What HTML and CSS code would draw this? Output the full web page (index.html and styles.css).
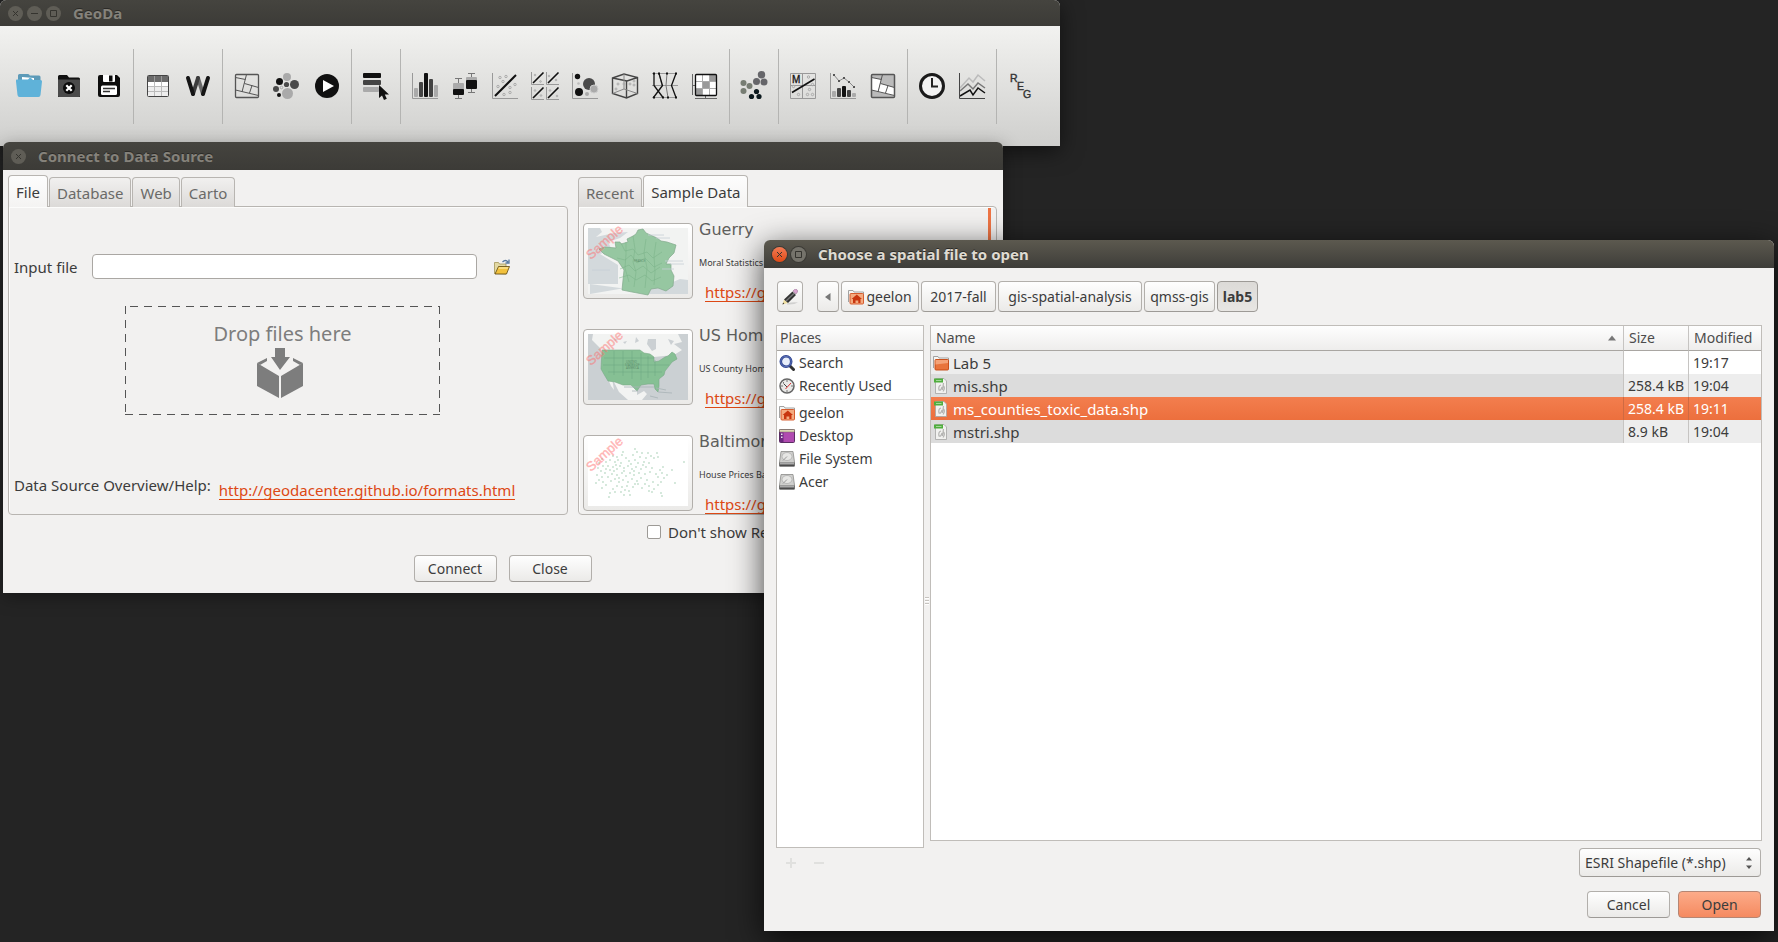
FILE: index.html
```html
<!DOCTYPE html>
<html lang="en">
<head>
<meta charset="utf-8">
<title>GeoDa</title>
<link rel="stylesheet" href="styles.css">
</head>
<body>
<main class="desktop">

<section class="window window-main" aria-label="GeoDa">
  <header class="titlebar titlebar-short">
    <button class="wm" aria-label="Close"><svg viewBox="0 0 15 15"><path d="M5 5l5 5M10 5l-5 5"/></svg></button>
    <button class="wm" aria-label="Minimize"><svg viewBox="0 0 15 15"><path d="M4 7.500h7"/></svg></button>
    <button class="wm" aria-label="Maximize"><svg viewBox="0 0 15 15"><path d="M4.500 4.500h6v6h-6z"/></svg></button>
    <h1 class="title">GeoDa</h1>
  </header>
  <nav class="toolbar">
    <button class="tool" aria-label="Open"><svg viewBox="0 0 30 30"><path fill="#5c9ab8" d="M4 4.500Q4 3 5.500 3H14q1.500 0 1.800 1.500H25q1.500 0 1.500 1.500v6H4z"/><path fill="#fff" d="M8 6l12 1v4H8z"/><path fill="#5fb2d9" d="M2.500 8.500H14L15.500 7H17l2 2h7.500q1.700 0 1.500 1.500L26.500 24q-.3 2-2 2h-19q-1.700 0-2-2L2 10.500q-.2-2 .500-2z"/></svg></button>
    <button class="tool" aria-label="Close project"><svg viewBox="0 0 30 30"><path fill="#111" d="M4 26V5.500Q4 4 5.500 4H13l2 2.500h9.500Q26 6.500 26 8v18z"/><path fill="#4a4a4a" d="M4 8.500h22V25q0 1-1 1H5q-1 0-1-1z"/><circle cx="15" cy="17" r="6" fill="#0b0b0b"/><path stroke="#fff" stroke-width="2.200" d="M12.300 14.300l5.400 5.400M17.700 14.300l-5.400 5.400"/></svg></button>
    <button class="tool" aria-label="Save"><svg viewBox="0 0 30 30"><path fill="#0d0d0d" d="M4 6q0-2 2-2h17l3 3v17q0 2-2 2H6q-2 0-2-2z"/><path fill="#fff" d="M9 4h12v6q0 1-1 1H10q-1 0-1-1z"/><path fill="#0d0d0d" d="M15 4.500h3.500v6H15z"/><rect x="7" y="14.500" width="16" height="9.500" rx="1.500" fill="#fff"/><path stroke="#333" stroke-width="1.500" d="M9 17.500h12M9 20.500h7"/></svg></button>
    <span class="sep"></span>
    <button class="tool" aria-label="Table"><svg viewBox="0 0 30 30"><rect x="4.500" y="4.500" width="21" height="21" rx="1" fill="#fff"/><path fill="#eee" d="M5 16h20v9H5z"/><path fill="#6b6b6b" d="M5 5h20v6H5z"/><path stroke="#bbb" fill="none" d="M5 15.500h20M5 20.500h20M11.500 11v14M18.500 11v14"/><path stroke="#999" d="M11.500 5v6M18.500 5v6"/><rect x="4.500" y="4.500" width="21" height="21" rx="1" fill="none" stroke="#444"/></svg></button>
    <button class="tool" aria-label="Weights"><svg viewBox="0 0 30 30" fill="none" stroke-width="4" stroke-linecap="round" stroke-linejoin="round"><path stroke="#6a6a6a" d="M15 7l5 16"/><path stroke="#3c3c3c" d="M10 23l5-16"/><path stroke="#151515" d="M5 7l5 16M20 23l5-16"/></svg></button>
    <span class="sep"></span>
    <button class="tool" aria-label="Map"><svg viewBox="0 0 30 30" fill="none" stroke="#555"><rect x="3.500" y="3.500" width="23" height="23" rx="1" stroke-width="1.300"/><path d="M3.500 6.500l10 2M14.500 3.500L10 21M3.500 19l23 5.500M12.500 12.500l14 4M20 14.500L17.500 22"/></svg></button>
    <button class="tool" aria-label="Cartogram"><svg viewBox="0 0 30 30"><g fill="#aaa"><circle cx="15" cy="6" r="4"/><circle cx="15.500" cy="22.500" r="5.500"/></g><g fill="#4a4a4a"><circle cx="22.500" cy="13.500" r="4.500"/><circle cx="14.500" cy="13.500" r="2.600"/><circle cx="4" cy="18" r="3"/></g><g fill="#111"><circle cx="7.500" cy="10.500" r="3.500"/><circle cx="7" cy="24" r="2"/></g><circle cx="9.500" cy="16.500" r="1.300" fill="none" stroke="#aaa"/></svg></button>
    <button class="tool" aria-label="Map movie"><svg viewBox="0 0 30 30"><circle cx="15" cy="15" r="12" fill="#111"/><path fill="#fff" d="M11 9l11 6-11 6z"/></svg></button>
    <span class="sep"></span>
    <button class="tool" aria-label="Category editor"><svg viewBox="0 0 30 30"><rect x="2" y="2" width="18" height="5" rx="1" fill="#111"/><rect x="2" y="9" width="18" height="5" rx="1" fill="#444"/><rect x="2" y="16" width="16" height="5" rx="1" fill="#aaa"/><path fill="#111" d="M18 14v13l3-2.500 2 4.500 2.800-1.300-2-4.200H28z"/></svg></button>
    <span class="sep"></span>
    <button class="tool" aria-label="Histogram"><svg viewBox="0 0 30 30"><path d="M2.500 2v25.500H28" fill="none" stroke="#999"/><g fill="#aaa"><rect x="4" y="17" width="4" height="9" rx="1"/><rect x="24" y="14" width="4" height="12" rx="1"/></g><g fill="#444"><rect x="9" y="11" width="4" height="15" rx="1"/><rect x="19" y="8" width="4" height="18" rx="1"/></g><rect x="14" y="2" width="4" height="24" rx="1" fill="#111"/></svg></button>
    <button class="tool" aria-label="Box plot"><svg viewBox="0 0 30 30"><path fill="none" stroke="#777" d="M5 7.500h7M8.500 7.500v20M5 27.500h7M18 2.500h7M21.500 2.500v19M18 21.500h7"/><rect x="3" y="12" width="11" height="7" rx="1" fill="#aaa"/><rect x="3" y="18" width="11" height="6" rx="1" fill="#111"/><rect x="16" y="6" width="11" height="4" rx="1" fill="#aaa"/><rect x="16" y="9" width="11" height="9" rx="1" fill="#111"/></svg></button>
    <button class="tool" aria-label="Scatter plot"><svg viewBox="0 0 30 30" fill="none"><path d="M2.500 2v25.500H28" stroke="#999"/><g stroke="#aaa"><circle cx="10" cy="6.500" r="1.200"/><circle cx="16" cy="5.500" r="1.200"/><circle cx="13" cy="10.500" r="1.200"/><circle cx="8" cy="15.500" r="1.200"/><circle cx="25" cy="13.500" r="1.200"/><circle cx="20" cy="16.500" r="1.200"/><circle cx="20" cy="21.500" r="1.200"/><circle cx="14" cy="23.500" r="1.200"/></g><path d="M5 25L26 4" stroke="#111" stroke-width="2"/></svg></button>
    <button class="tool" aria-label="Scatter plot matrix"><svg viewBox="0 0 30 30" fill="none"><path stroke="#999" d="M1.500 1v12.500H14M16.500 1v12.500H29M1.500 16v12.500H14M16.500 16v12.500H29"/><path stroke="#111" stroke-width="1.600" d="M3 12L13.500 1.500M18 12L28.500 1.500M3 27l10.500-10.500M18 27l10.500-10.500"/><g stroke="#aaa"><circle cx="5" cy="4" r=".8"/><circle cx="10.500" cy="10.500" r=".8"/><circle cx="19" cy="5" r=".8"/><circle cx="26" cy="9" r=".8"/><circle cx="5" cy="19.500" r=".8"/><circle cx="11" cy="24.500" r=".8"/><circle cx="20" cy="19.500" r=".8"/><circle cx="27" cy="25" r=".8"/></g></svg></button>
    <button class="tool" aria-label="Bubble chart"><svg viewBox="0 0 30 30"><path d="M2.500 2v25.500H28" fill="none" stroke="#999"/><circle cx="7.500" cy="5.500" r="2.700" fill="#111"/><circle cx="19" cy="13" r="6" fill="#4a4a4a"/><circle cx="24" cy="18" r="4" fill="#aaa" stroke="#ccc"/><circle cx="9" cy="21" r="4" fill="#111"/><circle cx="17" cy="23" r="2" fill="#aaa"/><circle cx="8.500" cy="12.500" r="1.300" fill="#bbb"/></svg></button>
    <button class="tool" aria-label="3D scatter plot"><svg viewBox="0 0 30 30" fill="none" stroke="#444"><path stroke-width="1.400" d="M2.500 7L14 3l13.500 3.500v16L16.500 27l-14-4.500zM2.500 7L17 10l10.500-3.500M16.500 10v17"/><path stroke="#888" d="M14 3v15L2.500 22.500M14 18l13.500 4.500"/><g stroke="#aaa"><circle cx="8" cy="13" r="1"/><circle cx="6" cy="18" r="1"/><circle cx="14" cy="13" r="1"/><circle cx="20" cy="13" r="1"/><circle cx="24" cy="14" r="1"/><circle cx="24" cy="10" r="1"/></g></svg></button>
    <button class="tool" aria-label="Parallel coordinate plot"><svg viewBox="0 0 30 30" fill="none"><path stroke="#999" d="M2 2.500h25M2 14.500h26M2 26.500h25"/><path stroke="#777" d="M9 2.500l3 12M17 2.500l-1 12 2 12"/><path stroke="#111" stroke-width="1.300" d="M4 2.500v12l9 12M9 2.500l3.500 12-9 12M26 2.500l-4.500 12 4.500 12"/><path fill="#111" d="M3 1.500h2v2H3zM8 1.500h2v2H8zM16 1.500h2v2h-2zM25 1.500h2v2h-2zM3 25.500h2v2H3zM12 25.500h2v2h-2zM17 25.500h2v2h-2zM25 25.500h2v2h-2z"/></svg></button>
    <button class="tool" aria-label="Conditional plot"><svg viewBox="0 0 30 30" fill="none"><path stroke="#666" d="M2.500 3v21M2.500 14.500H5M5 27.500h22M15.500 25v3"/><rect x="5.500" y="3.500" width="21" height="21" rx="1" fill="#fff"/><path fill="#999" d="M19.500 4H26v6.500h-6.500zM12.500 10.500h7v7h-7zM6 17.500h6.500V24H6z"/><path stroke="#aaa" d="M12.500 4v20M19.500 4v20M6 10.500h20M6 17.500h20"/><rect x="5.500" y="3.500" width="21" height="21" rx="1" stroke="#111" stroke-width="1.300"/></svg></button>
    <span class="sep"></span>
    <button class="tool" aria-label="Clusters"><svg viewBox="0 0 30 30"><g fill="#66666a"><circle cx="22.500" cy="3.700" r="3.700"/><circle cx="17.500" cy="10.500" r="3.500"/><circle cx="25" cy="11" r="3.500"/></g><g fill="#777d73"><circle cx="4.500" cy="12" r="3"/><circle cx="10.500" cy="15" r="3"/><circle cx="4.500" cy="20" r="3"/></g><g fill="#0d1a1f"><circle cx="17.500" cy="20.500" r="2.600"/><circle cx="12.500" cy="25.500" r="2.600"/><circle cx="20" cy="25.500" r="2.600"/></g></svg></button>
    <span class="sep"></span>
    <button class="tool" aria-label="Moran scatter plot"><svg viewBox="0 0 30 30" fill="none"><path stroke="#999" d="M2.500 2.500h25v25h-25zM2.500 14.500h25M14.500 2.500v25"/><g stroke="#aaa"><circle cx="20.500" cy="6" r="1.200"/><circle cx="24.500" cy="13.500" r="1.200"/><circle cx="21.500" cy="18.500" r="1.200"/><circle cx="19.500" cy="23.500" r="1.200"/><circle cx="24.500" cy="23.500" r="1.200"/><circle cx="10.500" cy="23.500" r="1.200"/><circle cx="5.500" cy="15.500" r="1.200"/></g><path stroke="#111" stroke-width="1.700" d="M4 21.500L26.500 8"/><text x="4" y="12" font-family="Liberation Sans, sans-serif" font-size="10" fill="#111" stroke="#111" stroke-width=".3">M</text></svg></button>
    <button class="tool" aria-label="Correlogram"><svg viewBox="0 0 30 30"><path fill="none" stroke="#999" d="M2.500 2v25.500H28"/><path fill="none" stroke="#888" d="M6 4l5 6 5-3 5 4 5 5"/><path fill="#555" d="M5 3h2v2H5zM10 9h2v2h-2zM15 6h2v2h-2zM20 10h2v2h-2zM25 15h2v2h-2z"/><g fill="#aaa"><rect x="4" y="20" width="4" height="6" rx="1"/><rect x="24" y="22" width="4" height="4" rx="1"/></g><g fill="#444"><rect x="9" y="17" width="4" height="9" rx="1"/><rect x="19" y="19" width="4" height="7" rx="1"/></g><rect x="14" y="15" width="4" height="11" rx="1" fill="#111"/></svg></button>
    <button class="tool" aria-label="Cluster map"><svg viewBox="0 0 30 30"><rect x="3.500" y="3.500" width="23" height="23" rx="1" fill="#bbb"/><path fill="#fff" d="M4 6.500l9 2L10 21l-6-2zM12.500 12.500L26 16.500v8L10.500 21z"/><g fill="none" stroke="#555"><rect x="3.500" y="3.500" width="23" height="23" rx="1" stroke-width="1.500"/><path d="M3.500 6.500l10 2M14.500 3.500L10 21M3.500 19l23 5.500M12.500 12.500l14 4M20 14.500L17.500 22"/></g></svg></button>
    <span class="sep"></span>
    <button class="tool" aria-label="Time"><svg viewBox="0 0 30 30" fill="none"><circle cx="15" cy="15" r="11.500" fill="#f2f2f2" stroke="#1a1a1a" stroke-width="3"/><path stroke="#222" stroke-width="2" d="M15 7v8.500h6"/></svg></button>
    <button class="tool" aria-label="Averages chart"><svg viewBox="0 0 30 30" fill="none" stroke-width="1.500"><path stroke="#bbb" d="M3 17l9-10 4 4 5-7 7 6"/><path stroke="#777" d="M3 20l8-7 5 5 5-6 7 5"/><path stroke="#111" d="M3 25l10-6 3 5 5-7 7 5"/><path stroke="#444" stroke-width="1" d="M2.500 2v25.500H28"/></svg></button>
    <span class="sep"></span>
    <button class="tool" aria-label="Regression"><svg viewBox="0 0 30 30" fill="#333" stroke="#333" stroke-width=".4" font-family="Liberation Sans, sans-serif" font-size="10.500"><text x="4" y="11">R</text><text x="11" y="19">E</text><text x="17" y="27">G</text></svg></button>
  </nav>
</section>

<section class="window window-source" aria-label="Connect to Data Source">
  <header class="titlebar">
    <button class="wm" aria-label="Close"><svg viewBox="0 0 15 15"><path d="M5 5l5 5M10 5l-5 5"/></svg></button>
    <h2 class="title">Connect to Data Source</h2>
  </header>
  <div class="source-body">
    <div class="columns">
      <div class="notebook">
        <div class="tabs" role="tablist">
          <button class="tab active" role="tab" aria-selected="true">File</button>
          <button class="tab" role="tab">Database</button>
          <button class="tab" role="tab">Web</button>
          <button class="tab" role="tab">Carto</button>
        </div>
        <div class="panel file-panel">
          <div class="input-row">
            <label for="input-file">Input file</label>
            <input id="input-file" class="field" type="text">
            <button class="browse" aria-label="Browse"><svg viewBox="0 0 16 16"><path fill="#e3d9a4" stroke="#a39558" stroke-width=".8" d="M.5 14.500v-11h4l1 1.500h6.500V15z"/><path fill="#f2c13c" stroke="#5d4710" stroke-width=".8" d="M1 15L4.500 7.500h11L12.500 15z"/><path fill="#fbe494" d="M5 8.200h9.300l-.6 1.500H4.300z"/><path fill="none" stroke="#54779f" stroke-width="1.300" d="M8.500 3q3-3 5.500 0M15 .5V4h-3.500"/></svg></button>
          </div>
          <div class="drop">
            <p class="drop-text">Drop files here</p>
            <svg class="drop-icon" viewBox="0 0 46 50"><g fill="#7d7d7d"><path d="M0 15l22 13v22L0 38zM46 15L24 28v22l22-12zM18 0h10v9h5L23 22 14 9h4z"/><path d="M0 15l10-5v3l-7 4zM46 15l-10-5v3l7 4z"/></g></svg>
          </div>
          <div class="help-row">
            <span>Data Source Overview/Help:</span>
            <a class="link help-link" href="#formats">http://geodacenter.github.io/formats.html</a>
          </div>
        </div>
      </div>
      <div class="notebook">
        <div class="tabs" role="tablist">
          <button class="tab" role="tab">Recent</button>
          <button class="tab active" role="tab" aria-selected="true">Sample Data</button>
        </div>
        <div class="panel sample-panel">
          <ul class="samples">
            <li class="sample">
              <button class="thumb" aria-label="Guerry"><svg viewBox="0 0 100 66"><path fill="#d3d9dc" d="M0 0h100v66H0z"/><path fill="#f2f3f2" d="M12 0h88v52l-8-1-7 3-5-1-2 3-20 0-2 7-24-3-30-4 0 10 35-6 23 6V66H0V56l30 0V37L12 26l12-4-4-8 12-4 8-6-14 1L8 9 14 4z"/><path fill="#96c7a1" stroke="#83a98c" stroke-width=".7" d="M11 21l6-2 11 1-1-6 5 0 1 2 7-2-1-3 6-3 3-2 2-4 5-1 3 4 11 5 4 3 6 1 9 3-2 8-5 5-3 6 5 0 0 6 3 6-1 10-7 5-8-3-7 1-3 6-16-3-10-2 2-20-6-9-8-4-6-3z"/><path fill="none" stroke="#79b186" stroke-width=".5" d="M33 15l4 8 8-2 5 6 9-3 6 6 9-6M29 30l8 2 6-5 6 8 8-5 9 9 8-4M32 41l9-4 6 6 8-5 8 7 9-6M31 50l10-3 7 5 9-5 7 6 9-4M45 8l2 13-2 13 3 10-2 15M58 11l-2 14 3 15-2 20M68 14l-2 14 1 16-1 13M38 14l0 12-1 14 4 14"/><path fill="none" stroke="#c6ced6" stroke-width=".8" d="M60 7h16M68 10h14M77 33h18M82 36h14M74 41h12M4 42h18"/><text x="46" y="34" class="map-label">FRANCE</text><text class="stamp" x="3" y="32" transform="rotate(-42 3 32)">Sample</text></svg></button>
              <div class="sample-info"><h3>Guerry</h3><p>Moral Statistics of France</p><a class="link" href="#guerry">https://geodacenter.github.io</a></div>
            </li>
            <li class="sample">
              <button class="thumb" aria-label="US Homicides"><svg viewBox="0 0 100 66"><path fill="#cbd0d3" d="M0 0h100v66H0z"/><path fill="#f2f3f2" d="M5 0h85l4 8-8 2 8 6-8 5-20 2H14L12 14 4 6zM17 38l14 5 10 1 8 7 0 10 7-4 3 3-5 6H40l-9-8-6-12-1-2 2 12-3-4z"/><path fill="#cbd0d3" d="M60 5l8 0 0 10-4 2-5-7zM48 3l3 4-4 2zM80 5l6 2-3 4zM26 4l4 2-3 1zM35 8l4-1-2 3z"/><path fill="#86c094" stroke="#78aa87" stroke-width=".6" d="M14 16h38l4 3 6 1 4 3 0 5 5-1 6-4 3-1 4-4 3 2 2 5-5 3-3 4-4 5-1 4-5 4 0 7-1 6-3-3-1-5-6 0-7 1-4 6-6-6-8 0-8-3-7-1-3-5-4-7z"/><path fill="none" stroke="#6ba580" stroke-width=".5" d="M16 24h50M15 31h66M20 38h54M26 17v24M35 17v25M44 17v28M53 19v27M60 22v22M67 26v16"/><path fill="none" stroke="#a8b3b6" stroke-width=".8" d="M36 53h30M44 57h6M68 54l10 2M70 58l14 1M62 62l8 2"/><text x="38" y="29" class="map-label">UNITED</text><text x="37" y="32" class="map-label">STATES OF</text><text x="38" y="35" class="map-label">AMERICA</text><text class="stamp" x="3" y="32" transform="rotate(-42 3 32)">Sample</text></svg></button>
              <div class="sample-info"><h3>US Homicides</h3><p>US County Homicides 1960-1990</p><a class="link" href="#homicides">https://geodacenter.github.io</a></div>
            </li>
            <li class="sample">
              <button class="thumb" aria-label="Baltimore"><svg viewBox="0 0 100 66"><path fill="#fff" d="M0 0h100v66H0z"/><path fill="none" stroke="#8fc2a0" stroke-width="1.400" stroke-linecap="round" d="M47 9h0M35 12h0M34 15h0M29 17h0M49 12h0M54 13h0M60 13h0M69 13h0M45 15h0M52 17h0M58 18h0M63 16h0M66 18h0M70 17h0M25 16h0M22 20h0M14 19h0M18 22h0M30 20h0M33 23h0M38 18h0M41 21h0M47 20h0M50 23h0M56 22h0M61 23h0M27 22h0M11 23h0M15 26h0M20 26h0M10 28h0M13 31h0M17 33h0M22 30h0M25 27h0M29 29h0M32 26h0M36 28h0M40 26h0M44 29h0M48 27h0M53 29h0M58 27h0M64 28h0M75 27h0M72 30h0M79 35h0M84 30h0M96 22h0M87 43h0M74 33h0M68 34h0M76 38h0M70 37h0M62 32h0M57 34h0M51 33h0M46 35h0M42 33h0M38 36h0M34 33h0M29 35h0M24 34h0M20 37h0M14 37h0M9 35h0M11 40h0M8 43h0M15 42h0M18 45h0M14 48h0M23 41h0M27 39h0M31 42h0M35 40h0M40 42h0M44 39h0M49 41h0M53 38h0M59 40h0M65 42h0M73 42h0M70 45h0M66 49h0M61 46h0M57 44h0M54 48h0M50 44h0M45 47h0M39 46h0M34 47h0M29 46h0M25 49h0M22 53h0M21 57h0M27 52h0M33 52h0M37 50h0M41 51h0M42 55h0M36 55h0M61 51h0M64 52h0M74 56h0M73 53h0M28 25h0M43 24h0M46 31h0M36 31h0M26 31h0M31 38h0M18 29h0M55 25h0M47 44h0"/><text class="stamp" x="3" y="32" transform="rotate(-42 3 32)">Sample</text></svg></button>
              <div class="sample-info"><h3>Baltimore</h3><p>House Prices Baltimore, MD</p><a class="link" href="#baltimore">https://geodacenter.github.io</a></div>
            </li>
          </ul>
          <span class="scroll-mark"></span>
        </div>
      </div>
    </div>
    <label class="check"><input type="checkbox"> Don't show Recent/Sample Data panel</label>
    <div class="source-actions">
      <button class="btn">Connect</button>
      <button class="btn">Close</button>
    </div>
  </div>
</section>

<section class="window window-chooser" aria-label="Choose a spatial file to open">
  <header class="titlebar titlebar-active">
    <button class="wm wm-close" aria-label="Close"><svg viewBox="0 0 15 15"><path d="M5 5l5 5M10 5l-5 5"/></svg></button>
    <button class="wm" aria-label="Maximize"><svg viewBox="0 0 15 15"><path d="M4.500 4.500h6v6h-6z"/></svg></button>
    <h2 class="title">Choose a spatial file to open</h2>
  </header>
  <div class="chooser-body">
    <nav class="pathbar">
      <button class="btn path path-edit" aria-label="Type a file name"><svg class="icon" viewBox="0 0 16 16"><path fill="#bbb" opacity=".6" d="M5 14.500q6-2 11-1-4 2.500-11 2z"/><path fill="#f0dfa0" d="M.5 15.500L2 10.500l4 3.500z"/><path fill="#333" d="M2 10.500L10.500 2.500l3.500 3.500L6 14zM.5 15.500l.6-2 1.200 1.200z"/><path fill="#777" d="M3.500 11.500L11.500 4l1 1-8 7.500z"/><path fill="#d9a3d0" stroke="#94678f" stroke-width=".5" d="M11 2l1.500-1.500q1.500-.8 2.500.3 1.200 1.200.3 2.500L14 5z"/></svg></button>
      <button class="btn path path-back" aria-label="Back"><svg class="arrow" viewBox="0 0 8 8"><path fill="#777" d="M6.500 0v8L1 4z"/></svg></button>
      <button class="btn path path-home"><svg class="icon" viewBox="0 0 16 16"><use href="#home"/></svg>geelon</button>
      <button class="btn path path-fall">2017-fall</button>
      <button class="btn path path-gis">gis-spatial-analysis</button>
      <button class="btn path path-qmss">qmss-gis</button>
      <button class="btn path path-current">lab5</button>
    </nav>
    <div class="panes">
      <div class="places-pane">
        <div class="places">
          <h3 class="list-head">Places</h3>
          <ul class="place-list">
            <li><svg class="icon" viewBox="0 0 16 16"><path stroke="#333" stroke-width="3" stroke-linecap="round" d="M11 11l3.500 3.500"/><circle cx="7" cy="6.500" r="5.200" fill="#e8eefa" stroke="#2c418f" stroke-width="2.600"/><circle cx="7" cy="6.500" r="5.200" fill="none" stroke="#7d93d0" stroke-width=".6"/></svg>Search</li>
            <li><svg class="icon" viewBox="0 0 16 16"><circle cx="8" cy="8" r="7" fill="#e9e9e7" stroke="#666" stroke-width="1.500"/><path stroke="#777" stroke-width="1" d="M8 2v2M8 12v2M2 8h2M12 8h2M3.800 3.800l1.200 1.200"/><path stroke="#444" stroke-width="1" d="M8 9L4.500 5.500"/><path stroke="#d33" stroke-width="1" d="M6.500 11L12 5"/></svg>Recently Used</li>
            <li class="place-split"><svg class="icon" viewBox="0 0 16 16"><g id="home"><path fill="#f5f5f3" stroke="#999" stroke-width=".9" d="M.5 13V1.500h4.500l1 1.500h9.500V6"/><rect x="2" y="4.500" width="13.500" height="10.500" rx="1" fill="#f4ab80" stroke="#d3501f" stroke-width=".9"/><path fill="#c8360f" d="M8.800 5.500l5.200 4.500h-1.500v4h-2.200v-2.500H7.500V14H5v-4H3.600z"/></g></svg>geelon</li>
            <li><svg class="icon" viewBox="0 0 16 16"><rect x=".5" y="1.500" width="15" height="13" rx="1" fill="#b04bb0" stroke="#5b2d63"/><path fill="#ddd8b8" stroke="#77735a" stroke-width=".5" d="M.5 1.500h15v2.500H.5z"/><path fill="#6d2a80" d="M1 4.500h3.500V14H1z"/><path fill="#efe9ef" d="M2 5.500h1.500V7H2zM2 8.500h1.500V10H2z"/></svg>Desktop</li>
            <li><svg class="icon" viewBox="0 0 16 16"><g id="disk"><path fill="#cfcfcd" stroke="#8b8b89" stroke-width=".8" d="M2 .5h12l1.500 10.500v4H.5v-4z"/><ellipse cx="8" cy="5.500" rx="5" ry="4" fill="#e6e6e4" stroke="#aaa" stroke-width=".7"/><path fill="none" stroke="#999" d="M4 9.500l4-4"/><path fill="#4b4b4b" d="M.5 11.500h15v4H.5z"/><path fill="#aaa" d="M1 11.500h14v2H1z"/></g></svg>File System</li>
            <li><svg class="icon" viewBox="0 0 16 16"><use href="#disk"/></svg>Acer</li>
          </ul>
        </div>
        <div class="place-tools">
          <button aria-label="Add bookmark" disabled><svg viewBox="0 0 10 10"><path d="M5 0v10M0 5h10"/></svg></button>
          <button aria-label="Remove bookmark" disabled><svg viewBox="0 0 10 10"><path d="M0 5h10"/></svg></button>
        </div>
      </div>
      <span class="grip"></span>
      <div class="files-pane">
        <div class="files">
          <table class="file-table">
            <colgroup><col><col class="col-size"><col class="col-modified"></colgroup>
            <thead>
              <tr><th><span class="sort">Name<svg class="sort-mark" viewBox="0 0 8 6"><path fill="#777" d="M0 5.500L4 .5l4 5z"/></svg></span></th><th>Size</th><th>Modified</th></tr>
            </thead>
            <tbody>
              <tr><td><span class="cell"><svg class="icon" viewBox="0 0 16 16"><path fill="#f5f5f3" stroke="#999" stroke-width=".9" d="M.5 13V1.500h4.500l1 1.500h9.500V6"/><rect x="2" y="4.500" width="13.500" height="10.500" rx="1" fill="#e8743c" stroke="#c4450f" stroke-width=".9"/><path fill="#f4a378" d="M2.500 5h12.500v3L2.500 9.500z"/></svg>Lab 5</span></td><td></td><td>19:17</td></tr>
              <tr><td><span class="cell"><svg class="icon" viewBox="0 0 16 16"><g id="doc"><path fill="#f1f1ef" stroke="#a5a5a3" stroke-width=".8" d="M2.500.5h8.500l2.500 2.500v12.500h-11z"/><path fill="#4fae3d" d="M1 .5h9v4H1z"/><path stroke="#b9e0b1" stroke-width=".8" d="M3 2.500h5.500"/><path fill="none" stroke="#b4b4b2" stroke-width="1.200" d="M10.500 5l-1 7M8 7q-3 1-2 5 2 1 3-3M10.500 8q2 2-.5 5.500"/></g></svg>mis.shp</span></td><td>258.4 kB</td><td>19:04</td></tr>
              <tr class="selected"><td><span class="cell"><svg class="icon" viewBox="0 0 16 16"><use href="#doc"/></svg>ms_counties_toxic_data.shp</span></td><td>258.4 kB</td><td>19:11</td></tr>
              <tr><td><span class="cell"><svg class="icon" viewBox="0 0 16 16"><use href="#doc"/></svg>mstri.shp</span></td><td>8.9 kB</td><td>19:04</td></tr>
            </tbody>
          </table>
        </div>
        <div class="filter">
          <select class="btn combo" aria-label="File type"><option>ESRI Shapefile (*.shp)</option></select>
          <svg class="combo-mark" viewBox="0 0 6 12"><path fill="#555" d="M0 3.500L3 0l3 3.500zM0 8.500L3 12l3-3.500z"/></svg>
        </div>
      </div>
    </div>
    <div class="chooser-actions">
      <button class="btn">Cancel</button>
      <button class="btn btn-open">Open</button>
    </div>
  </div>
</section>

</main>
</body>
</html>
```
FILE: styles.css
```css
* { box-sizing: border-box; }

body {
  margin: 0;
  background: #242424;
  color: #3c3c3c;
  font: 14px/20px "Noto Sans", "Open Sans", sans-serif;
}

h1, h2, h3, p, ul { margin: 0; padding: 0; font-size: inherit; font-weight: normal; }
ul { list-style: none; }
button, input, select { font: inherit; color: inherit; margin: 0; }
svg { display: block; }

.desktop { position: relative; min-height: 100vh; overflow: hidden; }

/* Windows */
.window {
  position: absolute;
  display: flex;
  flex-direction: column;
  background: #f2f1f0;
  border-radius: 6px 6px 0 0;
  box-shadow: 0 5px 22px rgba(0, 0, 0, .55);
}
.window-main { top: 0; left: 0; }
.window-source { top: 142px; left: 3px; right: 775px; box-shadow: 0 4px 18px rgba(0, 0, 0, .35); }
.window-chooser { top: 240px; left: 764px; right: 4px; bottom: 11px; box-shadow: 0 8px 32px rgba(0, 0, 0, .75); }

.titlebar {
  display: flex;
  align-items: center;
  gap: 4px;
  height: 28px;
  padding: 0 8px;
  border-radius: 6px 6px 0 0;
  background: linear-gradient(#45443f, #3c3b37);
  color: #85827b;
}
.titlebar-short { height: 26px; }
.titlebar-active { background: linear-gradient(#5c594f, #3e3d39); color: #dfdbd2; }
.title { margin-left: 8px; font-size: 15px; font-weight: bold; text-shadow: 0 -1px #2b2a27; }
.wm {
  width: 15px;
  height: 15px;
  padding: 0;
  border: 0;
  border-radius: 50%;
  background: #5f5d56;
}
.wm svg { width: 15px; height: 15px; fill: none; stroke: #35342f; }
.titlebar-active .wm { background: #75736b; box-shadow: 0 0 0 1px #3b3a35; }
.titlebar-active .wm-close { background: linear-gradient(#f37b55, #df4a16); }

/* Toolbar */
.toolbar {
  display: flex;
  align-items: center;
  height: 120px;
  padding: 0 19px 0 9px;
  background: linear-gradient(#f2f2f0, #cfcfcd);
}
.tool {
  display: grid;
  place-items: center;
  width: 40px;
  height: 40px;
  padding: 0;
  border: 0;
  background: none;
}
.tool svg { width: 30px; height: 30px; }
.sep { width: 9px; height: 75px; background: linear-gradient(#b4b4b2, #b4b4b2) center / 1px 100% no-repeat; }

/* Buttons */
.btn {
  height: 27px;
  min-width: 83px;
  padding: 0 8px;
  border: 1px solid #b2afab;
  border-bottom-color: #9d9a96;
  border-radius: 4px;
  background: linear-gradient(#fefefe, #ebeae8);
  white-space: nowrap;
}
.btn-open { background: linear-gradient(#fcab89, #f58a60); border-color: #b58674; }
.link { color: #dd4814; text-decoration: none; border-bottom: 1px solid #dd4814; line-height: 17px; }

/* Data source window */
.source-body { padding: 5px 6px 11px 5px; font-size: 15px; }
.columns { display: grid; grid-template-columns: 560fr 419fr; gap: 10px; }
.notebook { min-width: 0; }
.tabs { display: flex; align-items: flex-end; gap: 1px; height: 32px; }
.tab {
  height: 30px;
  padding: 0 7px;
  border: 1px solid #b8b5b1;
  border-bottom: 0;
  border-radius: 4px 4px 0 0;
  background: linear-gradient(#f1f0ef, #dcdad8);
  color: #6a6a68;
}
.tab.active {
  position: relative;
  z-index: 1;
  height: 32px;
  background: linear-gradient(#fdfdfd, #f4f3f2);
  color: #3c3c3c;
}
.panel {
  height: 309px;
  margin-top: -1px;
  border: 1px solid #b8b5b1;
  border-radius: 0 4px 4px 4px;
  box-shadow: inset 1px 1px #fcfcfb;
}
.file-panel { display: flex; flex-direction: column; padding: 47px 6px 14px 5px; }
.input-row { display: flex; align-items: center; }
.input-row label { width: 78px; }
.field { flex: 0 1 385px; min-width: 0; height: 25px; border: 1px solid #aaa7a3; border-radius: 4px; background: #fff; }
.browse { margin-left: 17px; padding: 0; border: 0; background: none; }
.browse svg { width: 16px; height: 16px; }

.drop {
  --dash: #555 0 8px, transparent 8px 14px;
  display: flex;
  flex-direction: column;
  align-items: center;
  width: 315px;
  height: 109px;
  margin: 27px 0 0 111px;
  padding-top: 14px;
  background:
    repeating-linear-gradient(90deg, var(--dash)) 5px 0 / 100% 1px no-repeat,
    repeating-linear-gradient(90deg, var(--dash)) 0 100% / 100% 1px no-repeat,
    repeating-linear-gradient(180deg, var(--dash)) 0 0 / 1px 100% no-repeat,
    repeating-linear-gradient(180deg, var(--dash)) 100% 0 / 1px 100% no-repeat;
}
.drop-text { color: #7d7d7d; font-size: 20px; line-height: 28px; }
.drop-icon { width: 46px; height: 50px; margin-right: 6px; }

.help-row { display: flex; gap: 8px; margin-top: auto; white-space: nowrap; }
.help-link { margin-top: 7px; }

.sample-panel { display: flex; justify-content: space-between; padding: 1px 5px 0 4px; overflow: hidden; }
.samples { display: grid; grid-auto-rows: 106px; padding-top: 15px; }
.sample { display: flex; gap: 6px; }
.thumb {
  width: 110px;
  height: 76px;
  padding: 4px;
  border: 1px solid #b2afab;
  border-radius: 4px;
  background: linear-gradient(#fff, #ebeae8);
}
.thumb svg { width: 100px; height: 66px; overflow: visible; }
.map-label { font: 3px "Noto Sans", sans-serif; fill: #5d8f6c; }
.stamp { font: 13px "Liberation Sans", sans-serif; fill: #ff6b6b; stroke: #ff6b6b; stroke-width: .4; opacity: .5; }
.sample-info { display: flex; flex-direction: column; align-items: flex-start; white-space: nowrap; }
.sample-info h3 { color: #5f5f5d; font: 16px/20px "DejaVu Sans", sans-serif; margin-top: -3px; }
.sample-info p { font-size: 9px; line-height: 16px; margin-top: 15px; }
.sample-info .link { margin: 13px 0 0 6px; }
.scroll-mark { width: 3px; background: #ee7444; }

.check { display: flex; align-items: center; gap: 7px; margin: 7px 0 0 639px; white-space: nowrap; }
.check input { appearance: none; width: 14px; height: 14px; border: 1px solid #9d9a96; border-radius: 2px; background: #fff; }
.source-actions { display: flex; justify-content: center; gap: 12px; padding-top: 13px; font-size: 14px; }

/* File chooser */
.chooser-body { flex: 1; min-height: 0; display: flex; flex-direction: column; padding: 13px 12px 13px; }
.pathbar { display: flex; gap: 2px; padding-left: 1px; }
.path { display: flex; align-items: center; justify-content: center; gap: 2px; min-width: 0; height: 31px; padding: 0; }
.path-edit { width: 26px; margin-right: 12px; }
.path-back { width: 22px; }
.path-home { width: 78px; }
.path-fall { width: 75px; }
.path-gis { width: 144px; }
.path-qmss { width: 71px; }
.path-current { width: 41px; font-weight: bold; background: linear-gradient(#dcdad7, #e8e6e3); border-color: #9d9a96; }
.icon { flex: none; width: 16px; height: 16px; }
.arrow { width: 8px; height: 8px; }

.panes { flex: 1; min-height: 0; display: flex; margin-top: 13px; }
.places-pane { flex: none; width: 148px; display: flex; flex-direction: column; }
.places { flex: 1; border: 1px solid #c0bdb9; background: #fff; }
.list-head, .file-table th {
  height: 25px;
  padding: 0 3px;
  border-bottom: 1px solid #a9a6a2;
  background: linear-gradient(#fefefe, #eeedec);
  color: #4c4c4c;
  font-weight: normal;
  line-height: 24px;
  text-align: left;
}
.place-list li { display: flex; align-items: center; gap: 4px; height: 23px; padding-left: 2px; }
.place-split { box-sizing: content-box; padding-top: 4px; background: linear-gradient(#dfdddb, #dfdddb) 0 2px / 100% 1px no-repeat; }
.place-tools { display: flex; gap: 18px; height: 29px; padding: 10px 10px 0; }
.place-tools button { padding: 0; border: 0; background: none; height: 10px; }
.place-tools svg { width: 10px; height: 10px; stroke: #e0e0de; stroke-width: 2; }
.grip {
  align-self: center;
  width: 4px;
  height: 8px;
  margin: 0 1px;
  background: repeating-linear-gradient(#c6c3bf 0 1px, #fff 1px 2px, transparent 2px 3px);
}

.files-pane { flex: 1; min-width: 0; display: flex; flex-direction: column; }
.files { flex: 1; border: 1px solid #c0bdb9; background: #fff; overflow: hidden; }
.file-table { width: 100%; table-layout: fixed; border-collapse: separate; border-spacing: 0; white-space: nowrap; }
.col-size { width: 65px; }
.col-modified { width: 73px; }
.file-table th { padding: 0 5px; }
.file-table td { height: 23px; padding: 0 4px; line-height: 22px; }
.file-table td:first-child { padding: 0 2px; background: #ededed; font-size: 15px; }
.file-table th + th, .file-table td + td { border-left: 1px solid #c6c4c2; }
.file-table tbody tr:nth-child(even) { background: #ededed; }
.file-table tbody tr:nth-child(even) td:first-child { background: #dcdcdc; }
.file-table tbody .selected td, .file-table tbody .selected td:first-child {
  background: linear-gradient(#f37e4e, #ec6f3d);
  border-color: #cf6a42;
  color: #fff;
}
.sort { display: flex; align-items: center; justify-content: space-between; padding-right: 2px; }
.sort-mark { width: 8px; height: 6px; }
.cell { display: flex; align-items: center; gap: 4px; }

.filter { position: relative; align-self: flex-end; margin: 7px 1px 0 0; }
.combo { display: block; appearance: none; width: 182px; height: 29px; padding: 0 5px; }
.combo-mark { position: absolute; right: 9px; top: 9px; width: 6px; height: 12px; pointer-events: none; }
.chooser-actions { display: flex; justify-content: flex-end; gap: 8px; margin: 14px 1px 0 0; }
```
